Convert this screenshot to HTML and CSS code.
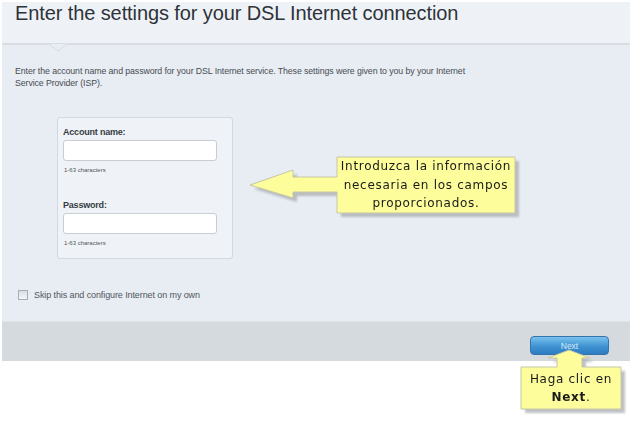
FILE: index.html
```html
<!DOCTYPE html>
<html>
<head>
<meta charset="utf-8">
<link rel="stylesheet" href="styles.css">
</head>
<body>
<div class="panel">
  <div class="header">
    <h1 class="title">Enter the settings for your DSL Internet connection</h1>
  </div>
  <div class="sep">
    <svg class="notch" width="18" height="8" viewBox="0 0 18 8"><polyline points="0,0 9,7 18,0" fill="#e8edf3" stroke="#d6dbe1" stroke-width="1"/></svg>
  </div>
  <div class="content">
    <p class="intro">Enter the account name and password for your DSL Internet service. These settings were given to you by your Internet<br>Service Provider (ISP).</p>
    <div class="card">
      <div class="field">
        <label class="label">Account name:</label>
        <div class="input"></div>
        <div class="hint">1-63 characters</div>
      </div>
      <div class="field">
        <label class="label">Password:</label>
        <div class="input"></div>
        <div class="hint">1-63 characters</div>
      </div>
    </div>
    <div class="skip">
      <span class="checkbox"></span>
      <span class="skip-text">Skip this and configure Internet on my own</span>
    </div>
  </div>
  <div class="footer">
    <button class="next">Next</button>
  </div>
</div>

<svg class="overlay" width="634" height="421" viewBox="0 0 634 421">
  <defs>
    <filter id="blur" x="-10%" y="-10%" width="120%" height="130%"><feGaussianBlur stdDeviation="1.2"/></filter>
  </defs>
  <g transform="translate(4,4)" filter="url(#blur)">
    <polygon points="250,185 293,170 293,177 337,177 337,157 515,157 515,213 337,213 337,192 293,192 293,198" fill="#a9adb2" opacity="0.75"/>
    <polygon points="569,350 590,358 582,358 582,367 621,367 621,409 521,409 521,367 557,367 557,358 548,358" fill="#a9adb2" opacity="0.75"/>
  </g>
  <polygon points="250,185 293,170 293,177 337,177 337,157 515,157 515,213 337,213 337,192 293,192 293,198" fill="#fdfd9c" stroke="#c6c6a6" stroke-width="1"/>
  <polygon points="569,350 590,358 582,358 582,367 621,367 621,409 521,409 521,367 557,367 557,358 548,358" fill="#fdfd9c" stroke="#c6c6a6" stroke-width="1"/>
</svg>
<div class="callout callout-left">Introduzca la información<br>necesaria en los campos<br>proporcionados.</div>
<div class="callout callout-bottom">Haga clic en<br><b>Next</b>.</div>
</body>
</html>
```
FILE: styles.css
```css
html, body {
  margin: 0;
  padding: 0;
  background: #ffffff;
  width: 634px;
  height: 421px;
  overflow: hidden;
  font-family: "Liberation Sans", Arial, sans-serif;
}
.panel {
  margin: 2px 4px 0 2px;
  width: 628px;
}
.header {
  height: 41px;
  background: #eef2f7;
  padding-left: 13px;
  box-sizing: border-box;
}
.title {
  margin: 0;
  padding-top: 0;
  font-weight: normal;
  font-size: 20px;
  line-height: 22px;
  color: #2e3339;
  letter-spacing: -0.1px;
}
.sep {
  position: relative;
  height: 2px;
  background: #d9dde3;
}
.notch {
  position: absolute;
  left: 47px;
  top: 1px;
  display: block;
}
.content {
  height: 276px;
  background: #e8edf3;
  box-sizing: border-box;
  padding: 20px 0 0 13px;
  display: flex;
  flex-direction: column;
}
.intro {
  margin: 0;
  font-size: 8.8px;
  line-height: 12px;
  color: #474c52;
  letter-spacing: -0.1px;
}
.card {
  margin: 28px 0 0 42px;
  width: 176px;
  height: 142px;
  box-sizing: border-box;
  background: #eff3f7;
  border: 1px solid #d3d8de;
  border-radius: 3px;
  padding: 9px 0 0 5px;
  display: flex;
  flex-direction: column;
  gap: 25px;
}
.field {
  display: flex;
  flex-direction: column;
}
.label {
  font-size: 9px;
  font-weight: bold;
  color: #363c43;
  line-height: 11px;
  letter-spacing: -0.2px;
}
.input {
  margin-top: 2px;
  width: 154px;
  height: 21px;
  box-sizing: border-box;
  background: #ffffff;
  border: 1px solid #c8cdd3;
  border-radius: 3px;
}
.hint {
  margin-top: 5px;
  padding-left: 1px;
  font-size: 6px;
  line-height: 9px;
  color: #4f555b;
}
.skip {
  margin: 31px 0 0 3px;
  display: flex;
  align-items: center;
  gap: 6px;
}
.checkbox {
  width: 8px;
  height: 8px;
  border: 1px solid #a8adb3;
  background: linear-gradient(#d9dde2, #f4f6f8);
}
.skip-text {
  font-size: 9px;
  color: #50565c;
  letter-spacing: -0.1px;
}
.footer {
  height: 40px;
  background: #d5dadf;
  border-top: 1px solid #dfe3e8;
  box-sizing: border-box;
  display: flex;
  justify-content: flex-end;
  align-items: flex-start;
  padding: 14px 21px 0 0;
}
.next {
  width: 79px;
  height: 19px;
  border: 1px solid #3573ad;
  border-radius: 4px;
  background: linear-gradient(#79c2ee, #3f93d3 55%, #2d7cc0);
  color: #d8ecf9;
  font-family: "Liberation Sans", Arial, sans-serif;
  font-size: 8.5px;
  padding: 0;
}
.overlay {
  position: absolute;
  left: 0;
  top: 0;
  pointer-events: none;
}
.callout {
  position: absolute;
  font-family: "DejaVu Sans", Verdana, sans-serif;
  font-size: 12px;
  color: #1a1a1a;
  text-align: center;
  letter-spacing: 0.7px;
}
.callout-left {
  left: 337px;
  top: 157px;
  width: 178px;
  line-height: 18.5px;
  padding-top: 0;
}
.callout-bottom {
  left: 521px;
  top: 370px;
  width: 100px;
  line-height: 18px;
}
.callout-bottom b {
  font-weight: bold;
}
```
